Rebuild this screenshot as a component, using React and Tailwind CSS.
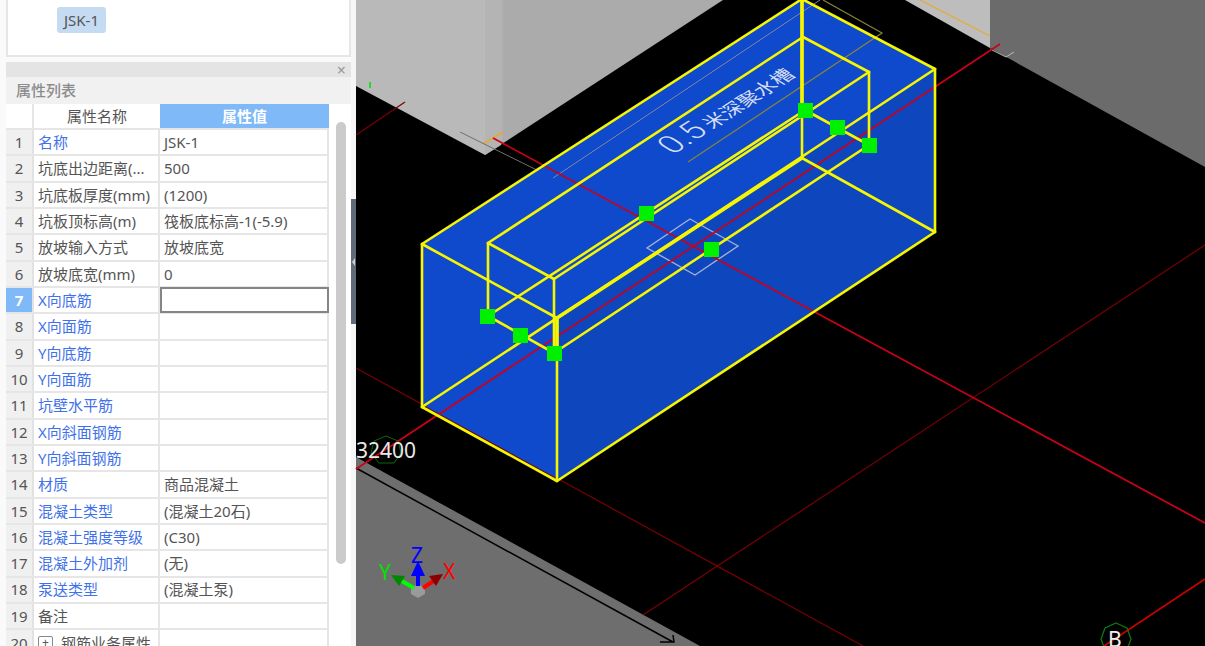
const filas = [
  { n: 1, nombre: '名称', valor: 'JSK-1', azul: true },
  { n: 2, nombre: '坑底出边距离(...', valor: '500' },
  { n: 3, nombre: '坑底板厚度(mm)', valor: '(1200)' },
  { n: 4, nombre: '坑板顶标高(m)', valor: '筏板底标高-1(-5.9)' },
  { n: 5, nombre: '放坡输入方式', valor: '放坡底宽' },
  { n: 6, nombre: '放坡底宽(mm)', valor: '0' },
  { n: 7, nombre: 'X向底筋', valor: '', azul: true, activa: true },
  { n: 8, nombre: 'X向面筋', valor: '', azul: true },
  { n: 9, nombre: 'Y向底筋', valor: '', azul: true },
  { n: 10, nombre: 'Y向面筋', valor: '', azul: true },
  { n: 11, nombre: '坑壁水平筋', valor: '', azul: true },
  { n: 12, nombre: 'X向斜面钢筋', valor: '', azul: true },
  { n: 13, nombre: 'Y向斜面钢筋', valor: '', azul: true },
  { n: 14, nombre: '材质', valor: '商品混凝土', azul: true },
  { n: 15, nombre: '混凝土类型', valor: '(混凝土20石)', azul: true },
  { n: 16, nombre: '混凝土强度等级', valor: '(C30)', azul: true },
  { n: 17, nombre: '混凝土外加剂', valor: '(无)', azul: true },
  { n: 18, nombre: '泵送类型', valor: '(混凝土泵)', azul: true },
  { n: 19, nombre: '备注', valor: '' },
];

const fuente = { fontFamily: '"Noto Sans", "Noto Sans CJK SC", sans-serif' };

const Fila = ({ fila }) => (
  <div className="flex h-[26.33px] shrink-0 border-b-2 border-[#e6e6e6]">
    <div
      className={`w-[28px] shrink-0 flex items-center justify-center border-r-2 border-[#e2e2e2] ${
        fila.activa ? 'bg-[#7fb9f8] text-white font-bold' : 'bg-[#f0f0f0] text-[#555]'
      }`}
    >
      {fila.n}
    </div>
    <div className={`w-[126px] shrink-0 flex items-center pl-[4px] border-r-2 border-[#e6e6e6] whitespace-nowrap ${fila.azul ? 'text-[#3f72ea]' : 'text-[#555]'}`}>
      {fila.nombre}
    </div>
    <div className={`flex-1 flex items-center pl-[4px] text-[#555] whitespace-nowrap ${fila.activa ? 'border-2 border-[#858585] -mt-[1px] h-[26px]' : 'border-r-2 border-[#e6e6e6]'}`}>
      {fila.valor}
    </div>
  </div>
);

const PanelPropiedades = () => (
  <div className="w-[351px] shrink-0 h-full pl-[6px] bg-[#fafafa] text-[15px] overflow-hidden" style={fuente}>
    <div className="h-[57px] bg-white border-2 border-t-0 border-[#e6e6e6] pt-[7px] pl-[49px]">
      <span className="inline-flex items-center justify-center w-[49px] h-[26px] rounded-[3px] bg-[#c4dbf2] text-[#555]">JSK-1</span>
    </div>
    <div className="mt-[5px] h-[15px] bg-[#e4e4e4] flex items-center justify-end pr-[5px] text-[#999] text-[16px] leading-none">×</div>
    <div className="h-[27px] bg-[#f1f1f1] flex items-center pl-[10px] text-[#8c8c8c] font-medium">属性列表</div>
    <div className="relative bg-white">
      <div className="w-[323px]">
        <div className="flex h-[26px] border-b-2 border-[#e6e6e6]">
          <div className="w-[28px] shrink-0 border-r-2 border-[#e6e6e6]" />
          <div className="w-[126px] shrink-0 flex items-center justify-center text-[#555]">属性名称</div>
          <div className="flex-1 flex items-center justify-center bg-[#7fb9f8] text-white font-semibold">属性值</div>
        </div>
        {filas.map((fila) => (
          <Fila key={fila.n} fila={fila} />
        ))}
        <div className="flex h-[26.33px] text-[#555]">
          <div className="w-[28px] shrink-0 flex items-center justify-center bg-[#f0f0f0] border-r-2 border-[#e2e2e2]">20</div>
          <div className="w-[126px] shrink-0 flex items-center pl-[4px] gap-[8px] border-r-2 border-[#e6e6e6] whitespace-nowrap">
            <span className="w-[15px] h-[15px] border border-[#888] rounded-[2px] flex items-center justify-center text-[12px] leading-none">+</span>
            钢筋业务属性
          </div>
          <div className="flex-1 border-r-2 border-[#e6e6e6]" />
        </div>
      </div>
      {/* scrollbar */}
      <div className="absolute left-[330px] top-[18px] w-[10px] h-[442px] rounded-full bg-[#cbcbcb]" />
    </div>
  </div>
);

const lineas = [
  // caja exterior
  [422, 244, 802, -1], [802, -1, 935, 69], [935, 69, 935, 232], [935, 232, 557, 481],
  [557, 481, 422, 407], [422, 407, 422, 244], [422, 244, 557, 318], [557, 318, 557, 481],
  [935, 69, 422, 407], [802, -1, 802, 158], [802, 158, 935, 232],
  // caja interior
  [488, 243, 803, 37], [803, 37, 869, 72], [869, 72, 869, 145], [488, 243, 488, 316],
  [488, 243, 554, 279], [554, 279, 554, 353], [869, 72, 554, 279], [488, 316, 805, 110],
  [805, 110, 869, 145], [488, 316, 554, 353], [554, 353, 869, 145],
];

const puntos = [
  [487, 316], [520, 335], [554, 353], [646, 213], [711, 249], [805, 110], [837, 127], [869, 145],
];

const Vista3D = () => (
  <svg className="flex-1 h-full block bg-black" viewBox="351 0 854 646">
    {/* asa del panel */}
    <rect x="351" y="0" width="5" height="646" fill="#f6f6f6" />
    <rect x="351" y="199" width="5" height="125" fill="#5f6b78" />
    <path d="M355 258 L352 262 L355 266 Z" fill="#c9ced3" />

    <g>
      {/* bloques grises */}
      <polygon points="356,0 485,0 485,155 356,86" fill="#b9b9b9" />
      <polygon points="485,0 723,0 485,155" fill="#ababab" />
      <polygon points="485,0 501,0 501,145 485,155" fill="#b4b4b4" />
      <line x1="502" y1="0" x2="502" y2="143" stroke="#b8b8b8" />
      <polygon points="905,0 990,0 990,48" fill="#bdbdbd" />
      <polygon points="990,0 1205,0 1205,167 990,48" fill="#6b6b6b" />
      <polygon points="356,457 700,646 356,646" fill="#6e6e6e" />
      <path d="M356 468 L673 642 M660 642 H674 L673 635" stroke="#000" strokeWidth="1.5" fill="none" />
      <line x1="920" y1="0" x2="990" y2="36" stroke="#e8a92e" strokeWidth="1.2" />
      <path d="M990 49 L1006 57 L1014 52" stroke="#bbb" fill="none" />
      <path d="M483 144 L503 132" stroke="#e8a92e" strokeWidth="1.5" />
      <path d="M460 132 L553 178" stroke="#6f6f6f" fill="none" />
      <rect x="369" y="82" width="2" height="6" fill="#22dd22" />

      {/* ejes oscuros */}
      <path d="M356 135 L405 102" stroke="#7a0000" strokeWidth="1.2" />
      <path d="M356 368 L863 646" stroke="#7a0000" strokeWidth="1.2" />
      <path d="M1205 245 L643 615" stroke="#7a0000" strokeWidth="1.2" />

      {/* cuerpo azul */}
      <polygon points="422,244 802,-1 935,69 935,232 557,481 422,407" fill="#0f49cc" />
      <polygon points="557,318 935,69 935,232 557,481" fill="#0e46be" />
      <path d="M422 407 L557 481" stroke="#7a0000" strokeWidth="1.2" transform="translate(0 -2)" />

      {/* rotulo sobre la cara superior */}
      <path d="M553 178 L820 0" stroke="#7f86a4" fill="none" />
      <path d="M823 0 L882 33 L688 162" stroke="#85853a" strokeWidth="1.2" fill="none" />
      <polygon points="690,219 738,246 695,275 647,248" stroke="#a3afd3" strokeWidth="1.4" fill="none" />
      <text
        transform="matrix(0.84 -0.54 0.84 0.54 673 155)"
        fill="#d6def4"
        style={fuente}
      >
        <tspan fontSize="32" fontFamily="Roboto" fontWeight="300">0.5</tspan>
        <tspan fontSize="20" dx="4">米深聚水槽</tspan>
      </text>

      {/* ejes rojos */}
      <path d="M493 138 L1205 523" stroke="#cc0018" strokeWidth="1.7" />
      <path d="M356 469 L1000 44" stroke="#cc0018" strokeWidth="1.7" />
      <path d="M1205 579 L1104 646" stroke="#c80000" strokeWidth="1.7" />

      {lineas.map(([x1, y1, x2, y2], i) => (
        <line key={i} x1={x1} y1={y1} x2={x2} y2={y2} stroke="#f6f600" strokeWidth="2.6" strokeLinecap="round" />
      ))}
      <path d="M802 158 L557 318 M557 318 V353 M802 -1 V110" stroke="#f6f600" strokeWidth="3.6" />

      {puntos.map(([x, y]) => (
        <rect key={`${x}-${y}`} x={x - 7} y={y - 7} width="15" height="15" fill="#00f000" />
      ))}

      {/* numeros de eje */}
      <polygon points="386,436 398,441 401,453 394,463 379,463 371,453 374,441" stroke="#0a6a0a" fill="none" />
      <text x="356" y="458" fill="#e8e8e8" fontSize="21" style={fuente}>32400</text>
      <polygon points="1116,623 1127,628 1131,639 1127,650 1105,650 1101,639 1105,628" stroke="#0a7a0a" strokeWidth="1.3" fill="none" />
      <text x="1108" y="647" fill="#f0f0f0" fontSize="21" style={fuente}>B</text>

      {/* triedro */}
      <polygon points="418,584 425,588 425,594 418,598 411,594 411,588" fill="#9a9a9a" />
      <path d="M418 586 V572" stroke="#0000ff" strokeWidth="4" />
      <path d="M418 561 L425 576 H411 Z" fill="#0000ff" />
      <path d="M414 588 L400 580" stroke="#00ff00" strokeWidth="4" />
      <path d="M391 575 L405 576 L399 586 Z" fill="#008800" />
      <path d="M423 588 L435 580" stroke="#ff0000" strokeWidth="4" />
      <path d="M443 574 L436 586 L429 576 Z" fill="#8a0000" />
      <text x="411" y="563" fill="#0000ff" fontSize="21" style={fuente}>Z</text>
      <text x="379" y="580" fill="#00e000" fontSize="21" style={fuente}>Y</text>
      <text x="443" y="579" fill="#ff0000" fontSize="21" style={fuente}>X</text>
    </g>
  </svg>
);

export default function App() {
  return (
    <div className="flex w-[1205px] h-[646px] overflow-hidden bg-black">
      <PanelPropiedades />
      <Vista3D />
    </div>
  );
}
